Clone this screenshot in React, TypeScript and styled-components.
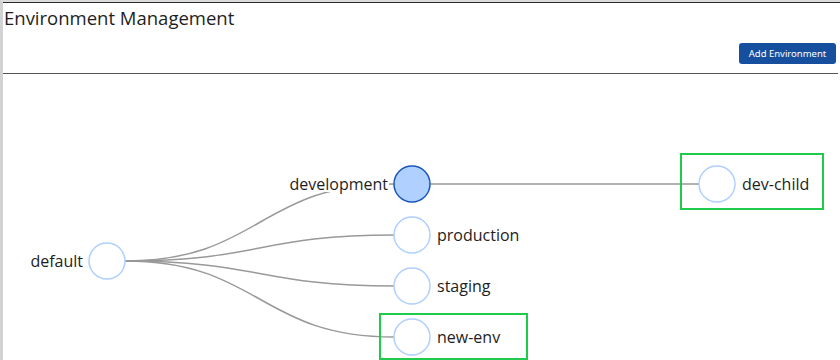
import React from 'react';
import styled, { createGlobalStyle } from 'styled-components';

const GlobalStyle = createGlobalStyle`
  html, body {
    margin: 0;
    padding: 0;
    background: #fff;
    font-family: "Open Sans", "Noto Sans", sans-serif;
    overflow: hidden;
  }
`;

const Frame = styled.div`
  width: 840px;
  height: 360px;
  box-sizing: border-box;
  border-top: 2px solid #dcdcdc;
  border-left: 3px solid #d2d2d2;
  display: flex;
  flex-direction: column;
`;

const Inner = styled.div`
  flex: 1;
  border-top: 1px solid #2a2a2a;
  display: flex;
  flex-direction: column;
`;

const Header = styled.header`
  display: flex;
  flex-direction: column;
  padding: 3px 2px 9px 1px;
  border-bottom: 1px solid #555;
  margin-right: 2px;
`;

const Title = styled.h1`
  margin: 0;
  font-size: 18.5px;
  font-weight: 400;
  color: #1e1e1e;
  line-height: 24px;
`;

const Toolbar = styled.div`
  display: flex;
  justify-content: flex-end;
  margin-top: 13px;
`;

const PrimaryButton = styled.button`
  height: 21px;
  width: 97px;
  padding: 0;
  border: none;
  border-radius: 3px;
  background: #164f9e;
  color: #fff;
  font-family: "Noto Sans", sans-serif;
  font-size: 9.5px;
  cursor: pointer;
`;

const Canvas = styled.svg`
  display: block;
  flex: 1;
  width: 100%;
  overflow: hidden;
`;

const NodeLabel = styled.text`
  font-family: "Open Sans", "Noto Sans", sans-serif;
  font-size: 16px;
  fill: #1e1e1e;
`;

type TreeNode = {
  id: string;
  x: number;
  y: number;
  parent?: string;
  active?: boolean;
  labelLeft?: boolean;
  highlight?: { dx: number; dy: number; w: number; h: number };
};

const R = 18;

// positions are in canvas coordinates (page x - 3, page y - 74)
const nodes: TreeNode[] = [
  { id: 'default', x: 104, y: 187, labelLeft: true },
  { id: 'development', x: 409, y: 110, parent: 'default', active: true, labelLeft: true },
  { id: 'production', x: 409, y: 161, parent: 'default' },
  { id: 'staging', x: 409, y: 212, parent: 'default' },
  { id: 'new-env', x: 409, y: 263, parent: 'default', highlight: { dx: -32, dy: -23, w: 147, h: 45 } },
  { id: 'dev-child', x: 714, y: 110, parent: 'development', highlight: { dx: -36, dy: -30, w: 142, h: 55 } },
];

const byId = (id: string) => nodes.find((n) => n.id === id)!;

const linkPath = (s: TreeNode, t: TreeNode) => {
  const x0 = s.x + R;
  const x1 = t.x - R;
  const mx = (x0 + x1) / 2;
  return `M${x0},${s.y} C${mx},${s.y} ${mx},${t.y} ${x1},${t.y}`;
};

const labelWidth = (id: string) => id.length * 9.1;

const EnvironmentTree = () => (
  <Canvas>
    <g>
      {nodes
        .filter((n) => n.parent)
        .map((n) => (
          <path
            key={`link-${n.id}`}
            d={linkPath(byId(n.parent!), n)}
            fill="none"
            stroke="#999"
            strokeWidth={1.5}
          />
        ))}
    </g>
    {nodes.map((n) => (
      <g key={n.id} transform={`translate(${n.x},${n.y})`}>
        {n.highlight && (
          <rect
            x={n.highlight.dx}
            y={n.highlight.dy}
            width={n.highlight.w}
            height={n.highlight.h}
            fill="none"
            stroke="#1fcb4a"
            strokeWidth={2}
          />
        )}
        {n.labelLeft && n.parent && (
          <rect
            x={-R - 7 - labelWidth(n.id)}
            y={-10}
            width={labelWidth(n.id) + 2}
            height={18}
            fill="#fff"
          />
        )}
        <circle
          r={R}
          fill={n.active ? '#b0d0ff' : '#fff'}
          stroke={n.active ? '#1b57b8' : '#b0d0ff'}
          strokeWidth={1.5}
        />
        <NodeLabel
          x={n.labelLeft ? -R - 6 : R + 7}
          dy="0.35em"
          textAnchor={n.labelLeft ? 'end' : 'start'}
        >
          {n.id}
        </NodeLabel>
      </g>
    ))}
  </Canvas>
);

export default function App() {
  return (
    <>
      <GlobalStyle />
      <Frame>
        <Inner>
          <Header>
            <Title>Environment Management</Title>
            <Toolbar>
              <PrimaryButton>Add Environment</PrimaryButton>
            </Toolbar>
          </Header>
          <EnvironmentTree />
        </Inner>
      </Frame>
    </>
  );
}
